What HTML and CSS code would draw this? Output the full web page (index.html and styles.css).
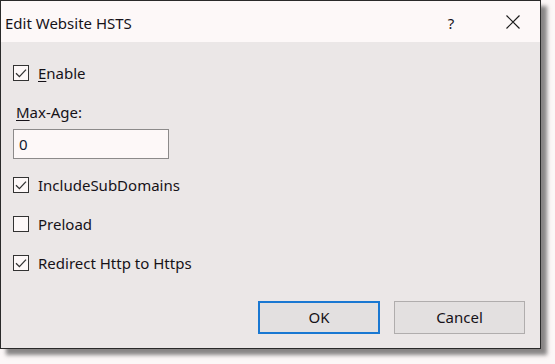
FILE: index.html
```html
<!DOCTYPE html>
<html>
<head>
<meta charset="utf-8">
<link rel="stylesheet" href="styles.css">
</head>
<body>
<div class="window">
  <div class="titlebar">
    <span class="title">Edit Website HSTS</span>
    <span class="help">?</span>
    <span class="close"><svg width="14" height="14" viewBox="0 0 14 14"><path d="M0.5 0.5 L13.5 13.5 M13.5 0.5 L0.5 13.5" stroke="#1b1b1b" stroke-width="1.2" fill="none"/></svg></span>
  </div>
  <div class="content">
    <div class="check enable">
      <span class="box"><svg width="14" height="14" viewBox="0 0 14 14"><path d="M2 7.2 L5.4 10.6 L12 3.6" stroke="#333" stroke-width="1.3" fill="none"/></svg></span>
      <span class="label"><u>E</u>nable</span>
    </div>
    <div class="field-label"><u>M</u>ax-Age:</div>
    <div class="input">0</div>
    <div class="check include">
      <span class="box"><svg width="14" height="14" viewBox="0 0 14 14"><path d="M2 7.2 L5.4 10.6 L12 3.6" stroke="#333" stroke-width="1.3" fill="none"/></svg></span>
      <span class="label">IncludeSubDomains</span>
    </div>
    <div class="check">
      <span class="box"></span>
      <span class="label">Preload</span>
    </div>
    <div class="check">
      <span class="box"><svg width="14" height="14" viewBox="0 0 14 14"><path d="M2 7.2 L5.4 10.6 L12 3.6" stroke="#333" stroke-width="1.3" fill="none"/></svg></span>
      <span class="label">Redirect Http to Https</span>
    </div>
    <div class="buttons">
      <div class="btn ok">OK</div>
      <div class="btn cancel">Cancel</div>
    </div>
  </div>
</div>
</body>
</html>
```

FILE: styles.css
```css
html, body {
  margin: 0;
  padding: 0;
  background: #fcf7f7;
  width: 555px;
  height: 364px;
  overflow: hidden;
}
body {
  font-family: "Noto Sans", "DejaVu Sans", sans-serif;
  font-size: 15px;
  color: #161218;
}
.window {
  width: 539px;
  height: 347px;
  border: 1px solid #2a2a2a;
  background: #ebe7e7;
  box-shadow: 6px 6px 4px rgba(40, 40, 40, 0.55);
  display: flex;
  flex-direction: column;
}
.titlebar {
  height: 41px;
  background: #fdf8f8;
  display: flex;
  align-items: center;
  padding-left: 4px;
}
.title {
  flex: 1;
  line-height: 20px;
  padding-top: 2px;
}
.help {
  width: 14px;
  text-align: center;
  margin-right: 48px;
  line-height: 20px;
  padding-top: 2px;
}
.close {
  width: 14px;
  height: 14px;
  margin-right: 20px;
  display: flex;
}
.content {
  flex: 1;
  display: flex;
  flex-direction: column;
  padding: 21px 15px 0 12px;
}
.check {
  display: flex;
  align-items: center;
  height: 20px;
  margin-bottom: 19px;
}
.check.enable {
  margin-bottom: 19px;
}
.box {
  width: 14px;
  height: 14px;
  border: 1px solid #333;
  background: #fdf8f8;
  margin-right: 9px;
  display: flex;
}
.label {
  line-height: 20px;
}
u {
  text-decoration-thickness: 1px;
  text-underline-offset: 2px;
}
.field-label {
  line-height: 20px;
  padding-left: 3px;
  margin-bottom: 7px;
}
.input {
  width: 149px;
  height: 28px;
  border: 1px solid #8c8a8a;
  background: #fdf8f8;
  line-height: 28px;
  padding-left: 5px;
  color: #101830;
  margin-bottom: 16px;
}
.check.include {
  margin-bottom: 19px;
}
.buttons {
  display: flex;
  justify-content: flex-end;
  gap: 14px;
  margin-top: 9px;
}
.btn {
  height: 31px;
  line-height: 31px;
  text-align: center;
  background: #e3e0e0;
  border: 1px solid #b0adad;
}
.ok {
  width: 118px;
  border: 2px solid #1a78d2;
  height: 29px;
  line-height: 29px;
}
.cancel {
  width: 129px;
}
```
